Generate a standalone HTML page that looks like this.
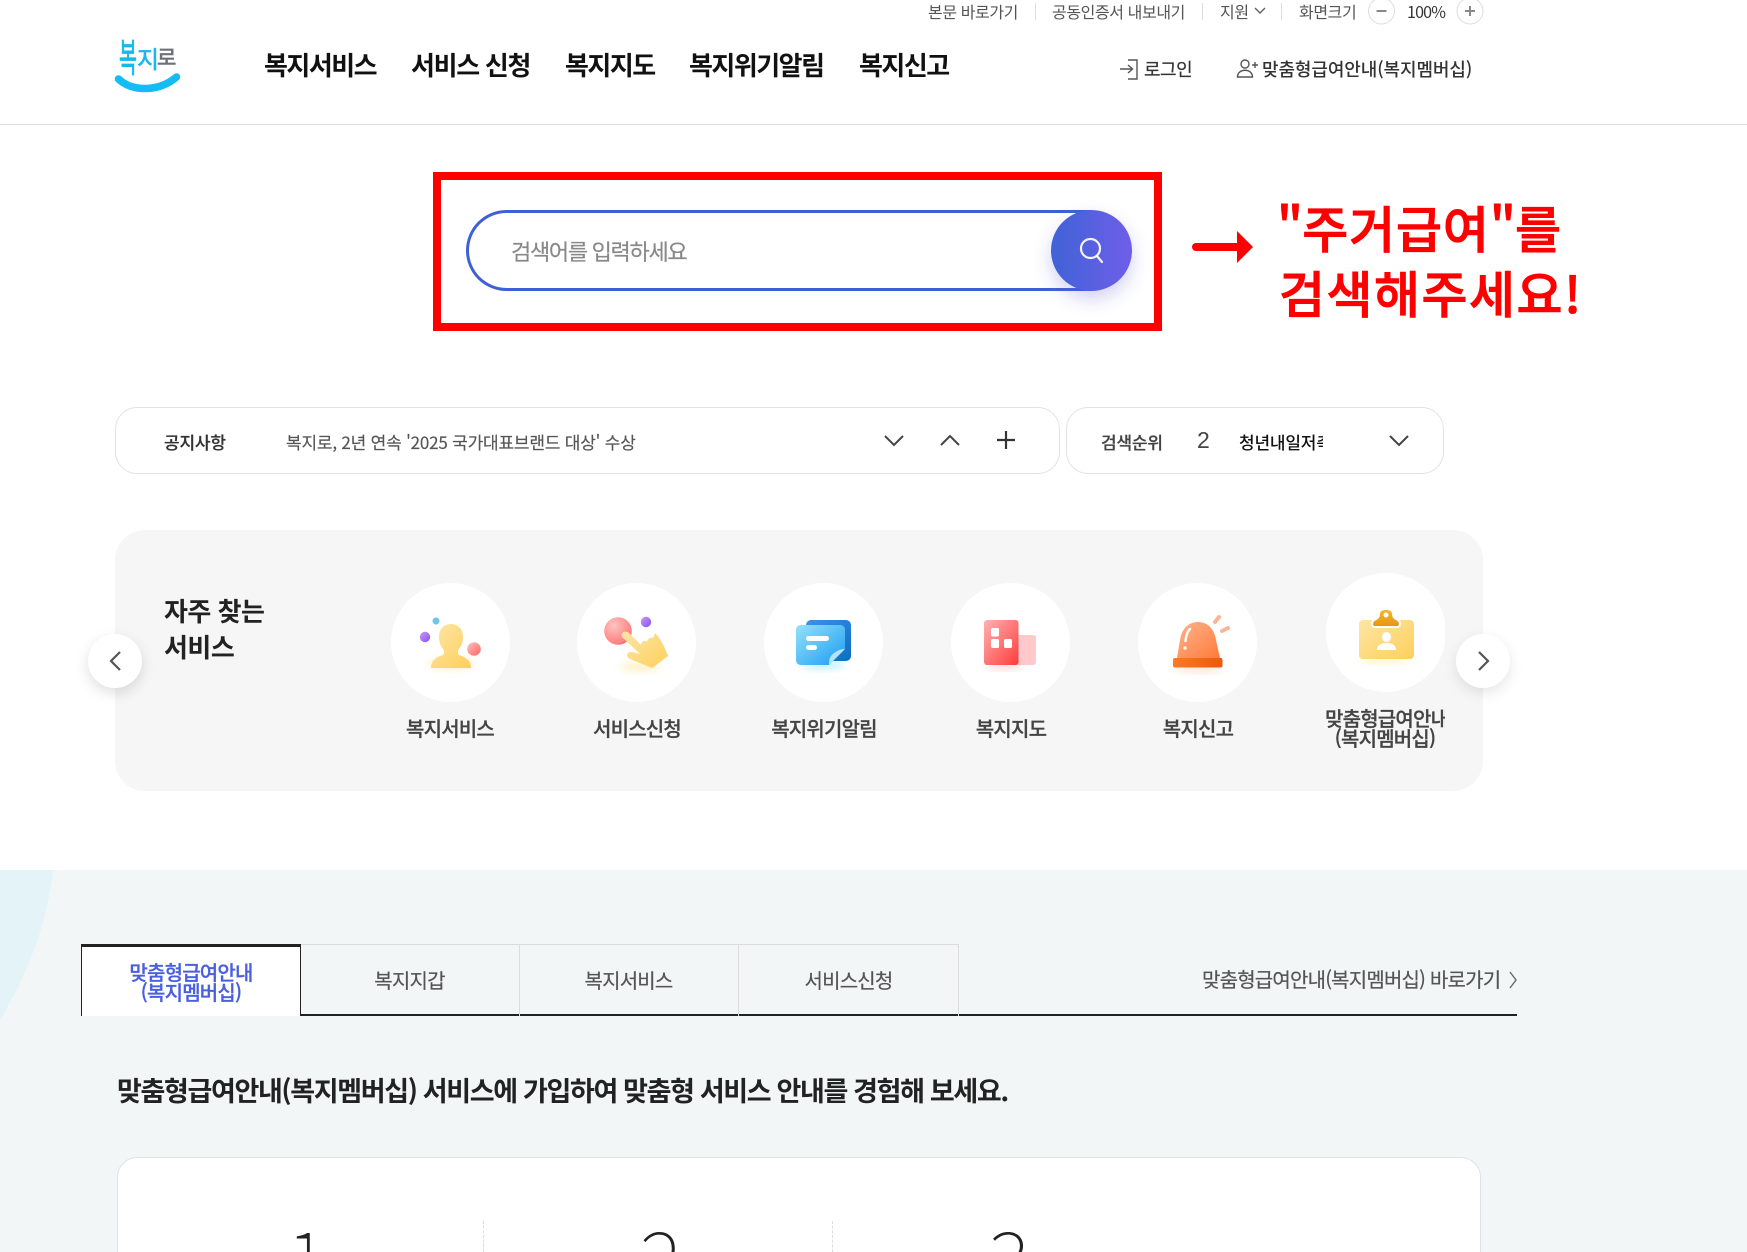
<!DOCTYPE html>
<html lang="ko">
<head>
<meta charset="utf-8">
<title>복지로</title>
<style>
html,body{margin:0;padding:0;background:#fff;width:1747px;height:1252px;overflow:hidden}
#w{width:1747px;height:1252px;position:relative;overflow:hidden;font-family:"Noto Sans CJK KR","Liberation Sans",sans-serif;color:#222}
.t{position:absolute;white-space:nowrap;line-height:1}
.top{font-size:16px;letter-spacing:-.4px;color:#555;top:3px;line-height:16px}
.nav{font-size:26px;letter-spacing:-1.5px;font-weight:700;color:#111;top:50px;line-height:30px}
.sep{position:absolute;width:1px;height:17px;top:3px;background:#ddd}
.box{position:absolute;box-sizing:border-box;background:#fff;border:1.5px solid #e2e2e2;border-radius:22px;top:407px;height:67px}
.circ{position:absolute;width:119px;height:119px;border-radius:50%;background:#fff;top:583px}
.lab{position:absolute;text-align:center;font-size:20px;letter-spacing:-.8px;font-weight:500;color:#444;line-height:21px;top:717px;width:160px;-webkit-text-stroke:.25px #444;white-space:nowrap}
.tab{position:absolute;top:944px;height:72px;box-sizing:border-box;border-top:1px solid #dcdcdc;border-right:1px solid #dcdcdc;text-align:center;font-size:20px;letter-spacing:-.8px;color:#555;line-height:70px;-webkit-text-stroke:.2px #555}
svg{position:absolute;left:0;top:0}
</style>
</head>
<body>
<div id="w">
<!-- header -->
<div style="position:absolute;left:0;top:124px;width:1747px;height:1px;background:#e0e0e0"></div>
<div class="t top" style="left:928px">본문 바로가기</div><div class="sep" style="left:1035px"></div>
<div class="t top" style="left:1052px">공동인증서 내보내기</div><div class="sep" style="left:1202px"></div>
<div class="t top" style="left:1220px">지원</div><div class="sep" style="left:1281px"></div>
<div class="t top" style="left:1299px">화면크기</div>
<div class="t top" style="left:1407px;color:#333;letter-spacing:-.8px">100%</div>
<div class="t nav" style="left:264px">복지서비스</div>
<div class="t nav" style="left:411px;letter-spacing:-1.3px">서비스 신청</div>
<div class="t nav" style="left:565px">복지지도</div>
<div class="t nav" style="left:689px">복지위기알림</div>
<div class="t nav" style="left:859px">복지신고</div>
<div class="t" style="left:1144px;top:58px;font-size:18px;line-height:22px;letter-spacing:-.5px;color:#333;-webkit-text-stroke:.2px #333">로그인</div>
<div class="t" style="left:1262px;top:58px;font-size:18px;line-height:22px;letter-spacing:-.1px;font-weight:500;color:#333">맞춤형급여안내(복지멤버십)</div>

<!-- search -->
<div style="position:absolute;left:433px;top:172px;width:729px;height:159px;box-sizing:border-box;border:8px solid #f00"></div>
<div style="position:absolute;left:466px;top:210px;width:625px;height:81px;box-sizing:border-box;border:3px solid #3d60d8;border-right:0;border-radius:41px 0 0 41px;background:#fff"></div>
<div class="t" style="left:511px;top:238px;font-size:22px;line-height:26px;letter-spacing:-1.3px;color:#888;-webkit-text-stroke:.2px #888">검색어를 입력하세요</div>
<div style="position:absolute;left:1051px;top:210px;width:81px;height:81px;border-radius:50%;background:linear-gradient(90deg,#3f63d6,#6f5ee9);box-shadow:0 8px 18px rgba(90,90,220,.28)"></div>
<!-- annotation -->
<div class="t" style="left:1277px;top:194px;font-size:50px;line-height:66px;font-weight:500;letter-spacing:.9px;color:#f00;-webkit-text-stroke:.9px #f00"><span style="letter-spacing:-.8px">"</span>주거급여<span style="letter-spacing:-.8px">"</span>를</div>
<div class="t" style="left:1279px;top:259px;font-size:50px;line-height:66px;font-weight:500;letter-spacing:1.500px;color:#f00;-webkit-text-stroke:.9px #f00">검색해주세요!</div>

<!-- notice -->
<div class="box" style="left:115px;width:945px"></div>
<div class="box" style="left:1066px;width:378px"></div>
<div class="t" style="left:164px;top:431px;font-size:17px;line-height:22px;font-weight:500;letter-spacing:-.2px;color:#333;-webkit-text-stroke:.2px #333">공지사항</div>
<div class="t" style="left:286px;top:431px;font-size:17px;line-height:22px;letter-spacing:-.2px;color:#555;-webkit-text-stroke:.15px #555">복지로, 2년 연속 '2025 국가대표브랜드 대상' 수상</div>
<div class="t" style="left:1101px;top:431px;font-size:17px;line-height:22px;font-weight:500;letter-spacing:-.2px;color:#444;-webkit-text-stroke:.2px #444">검색순위</div>
<div class="t" style="left:1197px;top:426px;font-size:23px;line-height:28px;color:#444;font-family:'Liberation Sans',sans-serif">2</div>
<div class="t" style="left:1239px;top:431px;width:84px;overflow:hidden;font-size:17px;line-height:22px;font-weight:500;letter-spacing:-.2px;color:#111">청년내일저축</div>

<!-- services -->
<div style="position:absolute;left:115px;top:530px;width:1368px;height:261px;border-radius:30px;background:#f6f6f6"></div>
<div class="t" style="left:164px;top:593px;font-size:26px;line-height:36px;letter-spacing:-.5px;font-weight:700;color:#222">자주 찾는<br>서비스</div>
<div class="circ" style="left:391px"></div>
<div class="circ" style="left:577px"></div>
<div class="circ" style="left:764px"></div>
<div class="circ" style="left:951px"></div>
<div class="circ" style="left:1138px"></div>
<div style="position:absolute;left:1326px;top:573px;width:119px;height:119px;overflow:hidden"><div style="width:120px;height:119px;border-radius:50%;background:#fff"></div></div>
<div class="lab" style="left:370px">복지서비스</div>
<div class="lab" style="left:557px">서비스신청</div>
<div class="lab" style="left:744px">복지위기알림</div>
<div class="lab" style="left:931px">복지지도</div>
<div class="lab" style="left:1118px">복지신고</div>
<div class="lab" style="left:1325px;width:120px;top:708px;line-height:20px;overflow:hidden"><span style="display:block;text-align:left">맞춤형급여안내</span><span style="display:block">(복지멤버십)</span></div>
<div style="position:absolute;left:88px;top:634px;width:54px;height:54px;border-radius:50%;background:#fff;box-shadow:0 5px 14px rgba(0,0,0,.13)"></div>
<div style="position:absolute;left:1456px;top:634px;width:54px;height:54px;border-radius:50%;background:#fff;box-shadow:0 5px 14px rgba(0,0,0,.10)"></div>

<!-- lower -->
<div style="position:absolute;left:0;top:870px;width:1747px;height:382px;background:#f2f6f7"></div>
<div style="position:absolute;left:81px;top:1014px;width:1436px;height:2px;background:#222"></div>
<div class="tab" style="left:300px;width:220px">복지지갑</div>
<div class="tab" style="left:519px;width:220px">복지서비스</div>
<div class="tab" style="left:739px;width:220px">서비스신청</div>
<div style="position:absolute;left:81px;top:944px;width:220px;height:72px;box-sizing:border-box;background:#fff;border-top:3px solid #222;border-left:1px solid #222;border-right:1px solid #222"></div>
<div class="t" style="left:81px;width:220px;top:962px;text-align:center;font-size:20px;line-height:20px;letter-spacing:-.8px;font-weight:500;color:#4a5fe0;-webkit-text-stroke:.25px #4a5fe0">맞춤형급여안내<br>(복지멤버십)</div>
<div class="t" style="left:1202px;top:967px;font-size:20px;line-height:24px;letter-spacing:-.8px;color:#555;-webkit-text-stroke:.2px #555">맞춤형급여안내(복지멤버십) 바로가기</div>
<div class="t" style="left:117px;top:1072px;font-size:27px;line-height:36px;letter-spacing:-1.35px;font-weight:700;color:#222">맞춤형급여안내(복지멤버십) 서비스에 가입하여 맞춤형 서비스 안내를 경험해 보세요.</div>
<div style="position:absolute;left:117px;top:1157px;width:1364px;height:120px;box-sizing:border-box;background:#fff;border:1px solid #dfe3e3;border-radius:20px"></div>
<div style="position:absolute;left:483px;top:1221px;height:31px;border-left:1px dashed #ddd"></div>
<div style="position:absolute;left:832px;top:1221px;height:31px;border-left:1px dashed #ddd"></div>
<div class="t" style="left:286px;top:1221px;font-size:80px;line-height:72px;font-weight:100;color:#222">1</div>
<div class="t" style="left:640px;top:1221px;font-size:80px;line-height:72px;font-weight:100;color:#222">2</div>
<div class="t" style="left:988px;top:1221px;font-size:80px;line-height:72px;font-weight:100;color:#222">3</div>

<svg width="1747" height="1252" viewBox="0 0 1747 1252" fill="none">
<defs>
<linearGradient id="gy" x1="0" y1="0" x2="1" y2="1"><stop offset="0" stop-color="#fbe6a6"/><stop offset="1" stop-color="#ffcf5c"/></linearGradient>
<linearGradient id="gr" x1="0" y1="0" x2="1" y2="1"><stop offset="0" stop-color="#ffb3b3"/><stop offset="1" stop-color="#ff3b3b"/></linearGradient>
<radialGradient id="gr2" cx=".35" cy=".3" r=".9"><stop offset="0" stop-color="#ffc2c2"/><stop offset=".75" stop-color="#ff8080"/><stop offset="1" stop-color="#f00"/></radialGradient>
<linearGradient id="gp" x1="0" y1="0" x2="1" y2="1"><stop offset="0" stop-color="#c59bf5"/><stop offset="1" stop-color="#8b4ff0"/></linearGradient>
<linearGradient id="gb" x1="0" y1="0" x2="1" y2="1"><stop offset="0" stop-color="#95e2f8"/><stop offset="1" stop-color="#1a9cf5"/></linearGradient>
<linearGradient id="gbd" x1="0" y1="0" x2="1" y2="1"><stop offset="0" stop-color="#3f8ff0"/><stop offset="1" stop-color="#0b6fbd"/></linearGradient>
<linearGradient id="go" x1="0" y1="0" x2="1" y2="1"><stop offset="0" stop-color="#ffb48e"/><stop offset="1" stop-color="#ff7a3a"/></linearGradient>
<linearGradient id="gob" x1="0" y1="0" x2="1" y2="0"><stop offset="0" stop-color="#ff7a22"/><stop offset="1" stop-color="#e85a0c"/></linearGradient>
<linearGradient id="gc" x1="0" y1="0" x2="0" y2="1"><stop offset="0" stop-color="#f5b82a"/><stop offset="1" stop-color="#e89410"/></linearGradient>
<filter id="bl" x="-50%" y="-50%" width="200%" height="200%"><feGaussianBlur stdDeviation="4"/></filter>
</defs>

<!-- logo -->
<text x="119" y="72" font-size="23" fill="#18b6ee" stroke="#18b6ee" stroke-width=".5" transform="translate(119 72) scale(.85 1.7) translate(-119 -72)" font-family="'WenQuanYi Zen Hei','Noto Sans CJK KR',sans-serif">복</text>
<text x="137" y="68" font-size="24" fill="#18b6ee" stroke="#18b6ee" stroke-width=".5" font-family="'WenQuanYi Zen Hei','Noto Sans CJK KR',sans-serif">지</text>
<text x="157" y="65" font-size="21" fill="#6f6f78" stroke="#6f6f78" stroke-width=".7" font-family="'WenQuanYi Zen Hei','Noto Sans CJK KR',sans-serif">로</text>
<path d="M118.500 79C132 92 159 92 176.500 77" stroke="#13bdf4" stroke-width="7.500" stroke-linecap="round"/>

<!-- top chevron and zoom buttons -->
<path d="M1255 8l5 5 5-5" stroke="#666" stroke-width="1.500"/>
<circle cx="1381.500" cy="11" r="13" fill="#fff" stroke="#ddd"/>
<path d="M1376.500 11h10" stroke="#888" stroke-width="2"/>
<circle cx="1470" cy="11" r="13" fill="#fff" stroke="#ddd"/>
<path d="M1465 11h10M1470 6v10" stroke="#888" stroke-width="2"/>

<!-- login icon -->
<path d="M1128 60h9v19h-9" stroke="#555" stroke-width="1.400"/>
<path d="M1120 69h12M1128 65l4.500 4-4.500 4" stroke="#555" stroke-width="1.400"/>
<!-- member icon -->
<circle cx="1245" cy="64" r="4" stroke="#555" stroke-width="1.400"/>
<path d="M1237.500 77c0-9 15-9 15 0z" stroke="#555" stroke-width="1.400"/>
<path d="M1252 65h6M1255 62v6" stroke="#555" stroke-width="1.400"/>

<!-- search icon -->
<circle cx="1090.500" cy="248.500" r="9.500" stroke="#fff" stroke-width="2.200" opacity=".92"/>
<path d="M1097 256l5 6" stroke="#fff" stroke-width="2.200" stroke-linecap="round" opacity=".92"/>

<!-- red arrow -->
<path d="M1196 247h44" stroke="#f00" stroke-width="8" stroke-linecap="round"/>
<path d="M1237 231l16 16-16 16z" fill="#f00"/>

<!-- notice chevrons -->
<path d="M885 436l9 9 9-9" stroke="#444" stroke-width="2"/>
<path d="M941 445l9-9 9 9" stroke="#444" stroke-width="2"/>
<path d="M997 440h18M1006 431v18" stroke="#333" stroke-width="2.200"/>
<path d="M1390 436l9 9 9-9" stroke="#444" stroke-width="2"/>

<!-- carousel chevrons -->
<path d="M120 652l-9 9 9 9" stroke="#555" stroke-width="2.200"/>
<path d="M1479 652l9 9-9 9" stroke="#555" stroke-width="2.200"/>

<!-- icon 1 person -->
<ellipse cx="451" cy="664" rx="24" ry="5" fill="#ffe9a8" opacity=".7" filter="url(#bl)"/>
<path d="M431 668c0-8 6-11 12-13 1.500-2 1.500-4 0-6-2-3-4-6-4-12 0-8 5-13 12-13s12 5 12 13c0 6-2 9-4 12-1.500 2-1.500 4 0 6 6 2 12 5 12 13z" fill="url(#gy)"/>
<circle cx="436" cy="621" r="3.500" fill="#6cc7ef"/>
<circle cx="425" cy="637" r="5.200" fill="url(#gp)"/>
<circle cx="474" cy="649" r="6.800" fill="url(#gr)" opacity=".8"/>

<!-- icon 2 hand -->
<circle cx="618" cy="631" r="13.800" fill="url(#gr2)"/>
<circle cx="646" cy="622" r="5.200" fill="url(#gp)"/>
<ellipse cx="640" cy="667" rx="20" ry="4" fill="#ffe9a8" opacity=".7" filter="url(#bl)"/>
<path d="M622 637C620 632 626 630 629 633L641 645C641 641 645 640 647 642C648 638 651 637 653 638L655 633C660 637 665 648 668 656L652 668L630 659C625 657 627 651 632 652L640 654Z" fill="url(#gy)"/>

<!-- icon 3 doc -->
<ellipse cx="823" cy="665" rx="22" ry="4" fill="#8fe6ff" opacity=".6" filter="url(#bl)"/>
<rect x="806" y="620" width="45" height="41" rx="5" fill="url(#gbd)"/>
<path d="M801 625h39c3 0 5 2 5 5v19l-16 16h-28c-3 0-5-2-5-5v-30c0-3 2-5 5-5z" fill="url(#gb)"/>
<path d="M845 649l-16 16c0-3 0-6 2-9 3-4 9-7 14-7z" fill="#b6e2f6"/>
<rect x="806" y="636" width="23" height="5" rx="2.500" fill="#fff"/>
<rect x="806" y="645" width="11" height="5" rx="2.500" fill="#fff"/>

<!-- icon 4 building -->
<rect x="1012" y="635" width="24" height="30" rx="3" fill="#ffc9cc"/>
<ellipse cx="1005" cy="666" rx="18" ry="3" fill="#ff8a8a" opacity=".4" filter="url(#bl)"/>
<rect x="984" y="620" width="34.500" height="45" rx="3" fill="url(#gr)"/>
<rect x="991" y="628" width="8" height="8.500" rx="1.500" fill="#fff"/>
<rect x="991" y="639" width="8" height="9" rx="1.500" fill="#fff"/>
<rect x="1004" y="639" width="8" height="9" rx="1.500" fill="#fff"/>

<!-- icon 5 siren -->
<ellipse cx="1198" cy="669" rx="24" ry="3" fill="#ffb48e" opacity=".45" filter="url(#bl)"/>
<path d="M1177 658L1180 640C1182 628 1189 622 1198 622S1214 628 1216 640L1220 658Z" fill="url(#go)"/>
<rect x="1173" y="658" width="49.500" height="9.500" rx="2" fill="url(#gob)"/>
<path d="M1190 629c-3 3-4 7-4.500 12" stroke="#fff" stroke-width="2.400" stroke-linecap="round"/>
<circle cx="1185" cy="648" r="1.600" fill="#fff"/>
<path d="M1215 622l4-5M1222 631l6-3" stroke="#ffb39a" stroke-width="4" stroke-linecap="round"/>

<!-- icon 6 clipboard -->
<ellipse cx="1386" cy="660" rx="26" ry="3" fill="#ffe98f" opacity=".6" filter="url(#bl)"/>
<rect x="1359" y="620" width="55" height="39" rx="4" fill="url(#gy)"/>
<path d="M1372 624c0-3 2-4 4-5 2-1 3-3 3-5 0-4 3-5 7-5s7 1 7 5c0 2 1 4 3 5 2 1 4 2 4 5 0 2-1 3-3 3h-22c-2 0-3-1-3-3z" fill="url(#gc)" stroke="#fff" stroke-width="2"/>
<circle cx="1386" cy="615" r="2.500" fill="#fff"/>
<ellipse cx="1386.500" cy="637" rx="4.500" ry="5" fill="#fff"/>
<path d="M1377 650c0-5 4-7 9.500-7s9.500 2 9.500 7z" fill="#fff"/>

<!-- tab link chevron -->
<path d="M1510 972l6 8-6 8" stroke="#666" stroke-width="1.400"/>
<!-- cyan curve -->
<path d="M0 870H53C47 925 27 975 0 1020Z" fill="#e3f3f7"/>
</svg>
</div>
</body>
</html>
